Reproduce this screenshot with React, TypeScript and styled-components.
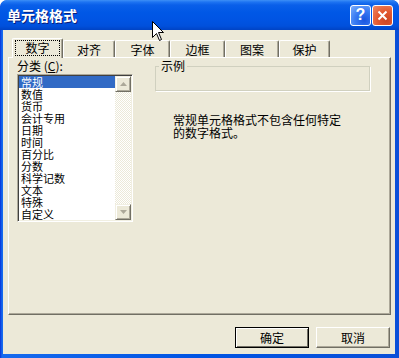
import React from "react";
import styled, { createGlobalStyle, css } from "styled-components";

const GlobalStyle = createGlobalStyle`
  html, body {
    margin: 0;
    padding: 0;
    background: #ffffff;
  }
  body {
    font-family: "Noto Sans CJK SC", "Liberation Sans", sans-serif;
    font-size: 12px;
    color: #000;
  }
`;

const Frame = styled.div`
  position: relative;
  width: 399px;
  height: 358px;
  box-sizing: border-box;
  display: flex;
  flex-direction: column;
  padding: 0 4px 4px 3px;
  border-radius: 7px 7px 0 0;
  background: linear-gradient(to right, #0831d9 0, #166aee 2px, #0054e3 50%, #0a4fd8 100%);
  overflow: hidden;
`;

const TitleBar = styled.div`
  height: 30px;
  margin: 0 -4px 0 -3px;
  padding: 0 6px 0 7px;
  display: flex;
  align-items: center;
  border-radius: 7px 7px 0 0;
  background: linear-gradient(
    to bottom,
    #3d8ff6 0,
    #1e74f2 2px,
    #0a5fe9 5px,
    #0058e6 12px,
    #0054e3 20px,
    #0050dc 26px,
    #0043c4 30px
  );
`;

const Title = styled.div`
  flex: 1;
  color: #ffffff;
  font-weight: bold;
  font-size: 14px;
  line-height: 16px;
  text-shadow: 1px 1px 0 #0a1e7a;
`;

const CaptionButton = styled.div<{ $kind: "help" | "close" }>`
  width: 21px;
  height: 21px;
  box-sizing: border-box;
  border: 1px solid #ffffff;
  border-radius: 3px;
  margin-left: 1px;
  display: flex;
  align-items: center;
  justify-content: center;
  color: #ffffff;
  font-family: "Liberation Sans", sans-serif;
  font-weight: bold;
  font-size: 16px;
  ${({ $kind }) =>
    $kind === "close"
      ? css`
          background: radial-gradient(circle at 70% 75%, #cc4623 0, #e3582f 45%, #f08a66 100%);
        `
      : css`
          background: radial-gradient(circle at 70% 75%, #1a55e0 0, #3a7cf3 50%, #7fb0fb 100%);
        `}
`;

const Client = styled.div`
  flex: 1;
  background: #ece9d8;
  display: flex;
  flex-direction: column;
  padding: 8px 4px 0 5px;
`;

const TabRow = styled.div`
  display: flex;
  align-items: flex-end;
  height: 19px;
  padding-left: 4px;
`;

const Tab = styled.div<{ $active?: boolean; $w: number }>`
  width: ${({ $w }) => $w}px;
  box-sizing: border-box;
  display: flex;
  align-items: center;
  justify-content: center;
  background: #ece9d8;
  border-top: 1px solid #ffffff;
  border-left: 1px solid #ffffff;
  border-right: 1px solid #716f64;
  box-shadow: inset -1px 0 0 #aca899;
  border-radius: 2px 2px 0 0;
  font-size: 12px;
  line-height: 12px;
  ${({ $active }) =>
    $active
      ? css`
          height: 20px;
          margin-bottom: -1px;
          position: relative;
          z-index: 1;
          padding: 1px 2px 2px 2px;
        `
      : css`
          height: 17px;
          padding-top: 1px;
        `}
`;

const FocusLabel = styled.span`
  flex: 1;
  align-self: stretch;
  display: flex;
  align-items: center;
  justify-content: center;
  border: 1px dotted #000;
`;

const Panel = styled.div`
  height: 258px;
  box-sizing: border-box;
  border-top: 1px solid #ffffff;
  border-left: 1px solid #ffffff;
  border-right: 1px solid #716f64;
  border-bottom: 1px solid #716f64;
  box-shadow: inset -1px -1px 0 #aca899;
  display: flex;
  padding: 2px 0 0 8px;
`;

const LeftColumn = styled.div`
  width: 116px;
  display: flex;
  flex-direction: column;
`;

const Label = styled.div`
  height: 12px;
  line-height: 12px;
  font-size: 12px;
  margin-bottom: 2px;
  u {
    text-decoration: underline;
  }
`;

const ListBox = styled.div`
  height: 148px;
  box-sizing: border-box;
  border-top: 1px solid #aca899;
  border-left: 1px solid #aca899;
  border-right: 1px solid #ffffff;
  border-bottom: 1px solid #ffffff;
  box-shadow: inset 1px 1px 0 #404040, inset -1px -1px 0 #f1efe2;
  padding: 1px;
  display: flex;
  background: #ffffff;
  overflow: hidden;
`;

const Items = styled.div`
  flex: 1;
  overflow: hidden;
`;

const Item = styled.div<{ $selected?: boolean }>`
  height: 12px;
  line-height: 12px;
  font-size: 11px;
  padding-left: 2px;
  white-space: nowrap;
  ${({ $selected }) =>
    $selected &&
    css`
      background: #316ac5;
      color: #ffffff;
    `}
`;

const ScrollBar = styled.div`
  width: 16px;
  display: flex;
  flex-direction: column;
  justify-content: space-between;
  background-color: #ffffff;
  background-image: repeating-conic-gradient(#ece9d8 0 25%, #ffffff 0 50%);
  background-size: 2px 2px;
`;

const ScrollButton = styled.div`
  height: 16px;
  box-sizing: border-box;
  background: #ece9d8;
  border-top: 1px solid #f1efe2;
  border-left: 1px solid #f1efe2;
  border-right: 1px solid #716f64;
  border-bottom: 1px solid #716f64;
  box-shadow: inset 1px 1px 0 #ffffff, inset -1px -1px 0 #aca899;
  display: flex;
  align-items: center;
  justify-content: center;
`;

const RightColumn = styled.div`
  width: 215px;
  margin-left: 22px;
  display: flex;
  flex-direction: column;
`;

const GroupBox = styled.fieldset`
  margin: 0;
  padding: 0;
  height: 31px;
  box-sizing: border-box;
  border: 1px solid #d0d0bf;
  border-radius: 0;
  box-shadow: 1px 1px 0 #ffffff;
  legend {
    margin-left: 3px;
    padding: 0 2px;
    font-size: 12px;
    line-height: 12px;
  }
`;

const Description = styled.div`
  margin: 22px 0 0 18px;
  font-size: 12px;
  line-height: 13px;
`;

const ButtonRow = styled.div`
  display: flex;
  justify-content: flex-end;
  gap: 7px;
  margin-top: 12px;
  padding-right: 1px;
`;

const Button = styled.div<{ $default?: boolean }>`
  width: 74px;
  height: 21px;
  box-sizing: border-box;
  display: flex;
  align-items: center;
  justify-content: center;
  font-size: 12px;
  background: #ece9d8;
  border-top: 1px solid #ffffff;
  border-left: 1px solid #ffffff;
  border-right: 1px solid #716f64;
  border-bottom: 1px solid #716f64;
  box-shadow: inset -1px -1px 0 #aca899;
  ${({ $default }) =>
    $default &&
    css`
      border-color: #000000;
      box-shadow: inset 1px 1px 0 #ffffff, inset -1px -1px 0 #716f64;
    `}
`;

const Cursor = styled.svg`
  position: absolute;
  left: 152px;
  top: 21px;
  z-index: 5;
`;

const tabs = [
  { label: "数字", w: 51 },
  { label: "对齐", w: 52 },
  { label: "字体", w: 55 },
  { label: "边框", w: 55 },
  { label: "图案", w: 54 },
  { label: "保护", w: 51 },
];

const categories = [
  "常规",
  "数值",
  "货币",
  "会计专用",
  "日期",
  "时间",
  "百分比",
  "分数",
  "科学记数",
  "文本",
  "特殊",
  "自定义",
];

const Arrow = ({ up }: { up?: boolean }) => (
  <svg width="7" height="4" viewBox="0 0 7 4">
    <path d={up ? "M3.5 0 L7 4 L0 4 Z" : "M0 0 L7 0 L3.5 4 Z"} fill="#aca899" />
  </svg>
);

export default function App() {
  return (
    <>
      <GlobalStyle />
      <Frame>
        <TitleBar>
          <Title>单元格格式</Title>
          <CaptionButton $kind="help">?</CaptionButton>
          <CaptionButton $kind="close">
            <svg width="11" height="11" viewBox="0 0 11 11">
              <path d="M1.5 1.5 L9.5 9.5 M9.5 1.5 L1.5 9.5" stroke="#fff" strokeWidth="2" />
            </svg>
          </CaptionButton>
        </TitleBar>
        <Client>
          <TabRow>
            {tabs.map((t, i) =>
              i === 0 ? (
                <Tab key={t.label} $w={t.w} $active>
                  <FocusLabel>{t.label}</FocusLabel>
                </Tab>
              ) : (
                <Tab key={t.label} $w={t.w}>
                  {t.label}
                </Tab>
              )
            )}
          </TabRow>
          <Panel>
            <LeftColumn>
              <Label>
                分类 (<u>C</u>):
              </Label>
              <ListBox>
                <Items>
                  {categories.map((c, i) => (
                    <Item key={c} $selected={i === 0}>
                      {c}
                    </Item>
                  ))}
                </Items>
                <ScrollBar>
                  <ScrollButton>
                    <Arrow up />
                  </ScrollButton>
                  <ScrollButton>
                    <Arrow />
                  </ScrollButton>
                </ScrollBar>
              </ListBox>
            </LeftColumn>
            <RightColumn>
              <GroupBox>
                <legend>示例</legend>
              </GroupBox>
              <Description>
                常规单元格格式不包含任何特定
                <br />
                的数字格式。
              </Description>
            </RightColumn>
          </Panel>
          <ButtonRow>
            <Button $default>确定</Button>
            <Button>取消</Button>
          </ButtonRow>
        </Client>
        <Cursor width="13" height="21" viewBox="0 0 13 21">
          <path
            d="M0.5 0.5 L0.5 16.5 L4.5 12.5 L7.5 19.5 L9.5 18.5 L6.5 11.5 L11.5 11.5 Z"
            fill="#ffffff"
            stroke="#000000"
            strokeWidth="1"
          />
        </Cursor>
      </Frame>
    </>
  );
}
